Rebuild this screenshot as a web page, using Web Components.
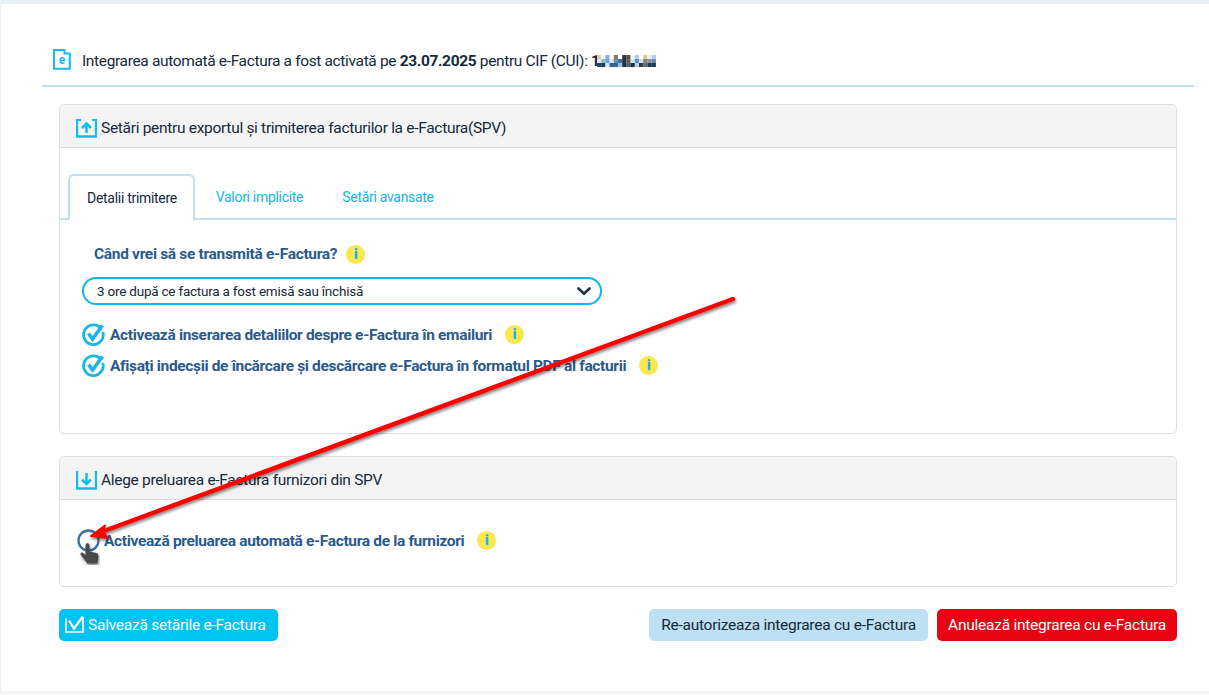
<!DOCTYPE html>
<html lang="ro">
<head>
<meta charset="utf-8">
<title>e-Factura</title>
<style>
html, body { margin: 0; height: 100%; }
body {
    background: #f5f5f5;
    font-family: Roboto, "Liberation Sans", sans-serif;
    color: #16293a;
    overflow: hidden;
}
</style>
</head>
<body>
<efactura-page></efactura-page>

<script>
const ICONS = {
    doc: `<svg width="18" height="21" viewBox="0 0 18 21" fill="none"><path d="M1 1H11.500V4.500H16.800V19.800H1Z" stroke="#12bdec" stroke-width="2"/><text x="8.800" y="15" font-family="Roboto, sans-serif" font-size="12" font-weight="700" text-anchor="middle" fill="#12bdec">e</text></svg>`,
    up: `<svg width="21" height="19" viewBox="0 0 21 19" fill="none" stroke="#12bdec"><path d="M1 0V17.500H20V0" stroke-width="2.300"/><path d="M1 1H5M16 1H20" stroke-width="2"/><path d="M10.500 14V5M6 9L10.500 4.500L15 9" stroke-width="2.500"/></svg>`,
    down: `<svg width="21" height="19" viewBox="0 0 21 19" fill="none" stroke="#12bdec"><path d="M1 0V17.500H20V0" stroke-width="2.300"/><path d="M10.500 2V12.500M6 8.500L10.500 13L15 8.500" stroke-width="2.500"/></svg>`,
    check: `<svg width="23" height="23" viewBox="0 0 23 23" fill="none" stroke="#19b5e6"><path d="M18.300 4.800A9.800 9.800 0 1 0 20.800 9" stroke-width="2.800"/><path d="M6.500 10.500L10.500 16L20.500 2.500" stroke-width="3.600"/></svg>`,
    save: `<svg width="19" height="18" viewBox="0 0 19 18" fill="none" stroke="#fff"><path d="M1 2.500V16H18V1" stroke-width="1.700"/><path d="M4 4.500L9 12.500L17.800 .5" stroke-width="2.300"/></svg>`,
    chevron: `<svg width="14" height="9" viewBox="0 0 14 9" fill="none" stroke="#1d3444" stroke-width="2.600" stroke-linecap="round" stroke-linejoin="round"><path d="M1.500 1.500L7 6.800L12.500 1.500"/></svg>`
};

class EfInfo extends HTMLElement {
    constructor() {
        super();
        this.attachShadow({mode: "open"});
        this.shadowRoot.innerHTML = `<style>
        :host {
            display: inline-flex;
            width: 19px;
            height: 19px;
            border-radius: 50%;
            background: #fde74c;
            color: #1fb4e6;
            align-items: center;
            justify-content: center;
            font-size: 15px;
            font-weight: 900;
            letter-spacing: 0;
            line-height: 1;
        }
        </style>i`;
    }
}
customElements.define("ef-info", EfInfo);

class EfCheck extends HTMLElement {
    constructor() {
        super();
        this.attachShadow({mode: "open"});
        this.shadowRoot.innerHTML = `<style>
        :host {
            display: flex;
            align-items: center;
            height: 23px;
            color: #2a5a8c;
            font-size: 15.500px;
            font-weight: 700;
            letter-spacing: -.34px;
        }
        .box { width: 23px; height: 23px; margin-right: var(--check-gap, 5px); flex: none; }
        ef-info { margin-left: 13px; }
        svg { display: block; }
        </style>
        <span class="box"><slot name="icon">${ICONS.check}</slot></span>
        <slot></slot>
        <ef-info></ef-info>`;
    }
}
customElements.define("ef-check", EfCheck);

class EfPanel extends HTMLElement {
    constructor() {
        super();
        this.attachShadow({mode: "open"});
    }
    connectedCallback() {
        this.shadowRoot.innerHTML = `<style>
        :host {
            display: block;
            border: 1px solid #dedede;
            border-radius: 5px;
            background: #fff;
        }
        header {
            height: 43px;
            box-sizing: border-box;
            display: flex;
            align-items: center;
            gap: 4px;
            padding: 4px 0 0 16px;
            background: #f4f4f4;
            border-bottom: 1px solid #dedede;
            border-radius: 5px 5px 0 0;
            font-size: 15.500px;
            letter-spacing: -.3px;
            color: #16293a;
        }
        svg { display: block; }
        </style>
        <header>${ICONS[this.getAttribute("icon")]}<span><slot name="title"></slot></span></header>
        <slot></slot>`;
    }
}
customElements.define("ef-panel", EfPanel);

class EfTabs extends HTMLElement {
    constructor() {
        super();
        this.attachShadow({mode: "open"});
        this.shadowRoot.innerHTML = `<style>
        :host {
            display: flex;
            height: 44px;
            margin-top: 26px;
            padding-left: 8px;
            border-bottom: 2px solid #bde0f3;
            font-size: 14px;
            letter-spacing: -.3px;
        }
        div {
            display: flex;
            align-items: center;
            justify-content: center;
            height: 46px;
            box-sizing: border-box;
            color: #12b5ea;
        }
        .on {
            width: 127px;
            padding-left: 1px;
            color: #16293a;
            background: #fff;
            border: 2px solid #bde0f3;
            border-bottom: 0;
            border-radius: 6px 6px 0 0;
        }
        .a { width: 129px; }
        .b { width: 128px; }
        </style>
        <div class="on">Detalii trimitere</div>
        <div class="a">Valori implicite</div>
        <div class="b">Setări avansate</div>`;
    }
}
customElements.define("ef-tabs", EfTabs);

class EfSelect extends HTMLElement {
    constructor() {
        super();
        this.attachShadow({mode: "open"});
        this.shadowRoot.innerHTML = `<style>
        :host {
            display: flex;
            align-items: center;
            justify-content: space-between;
            width: 520px;
            height: 28px;
            box-sizing: border-box;
            padding: 0 9px 0 13px;
            border: 2px solid #12b5ea;
            border-radius: 14px;
            font-size: 13.500px;
            letter-spacing: -.22px;
            color: #16293a;
        }
        svg { display: block; }
        </style>
        <slot></slot>${ICONS.chevron}`;
    }
}
customElements.define("ef-select", EfSelect);

class EfButton extends HTMLElement {
    constructor() {
        super();
        this.attachShadow({mode: "open"});
    }
    connectedCallback() {
        const kind = this.getAttribute("kind");
        this.shadowRoot.innerHTML = `<style>
        :host {
            display: inline-flex;
            align-items: center;
            justify-content: center;
            gap: 4px;
            height: 32px;
            border-radius: 5px;
            font-size: 15.500px;
            letter-spacing: -.25px;
            box-sizing: border-box;
        }
        :host([kind=save]) { background: #00c3f2; color: #fff; width: 219px; justify-content: flex-start; padding-left: 6px; }
        :host([kind=auth]) { background: #bde0f3; color: #16293a; width: 279px; }
        :host([kind=stop]) { background: #e60513; color: #fff; width: 240px; }
        svg { display: block; }
        </style>${kind === "save" ? ICONS.save : ""}<slot></slot>`;
    }
}
customElements.define("ef-button", EfButton);

class EfArrow extends HTMLElement {
    constructor() {
        super();
        this.attachShadow({mode: "open"});
        // sageata si cursorul sunt adnotari peste pagina
        this.shadowRoot.innerHTML = `<style>
        :host { position: absolute; left: 0; top: 0; pointer-events: none; }
        svg { display: block; }
        </style>
        <svg width="1209" height="695" viewBox="0 0 1209 695">
            <defs><filter id="s" x="-5%" y="-5%" width="110%" height="110%"><feDropShadow dx="1" dy="2" stdDeviation="1.600" flood-color="#000" flood-opacity=".5"/></filter></defs>
            <g filter="url(#s)">
                <path d="M733 299L104 531" stroke="#f00" stroke-width="4.500" stroke-linecap="round"/>
                <path d="M91 536L105 525.500L103 531L107.500 538Z" fill="#f00" stroke="#f00" stroke-width="2" stroke-linejoin="round"/>
            </g>
            <g filter="url(#s)">
                <path d="M85.500 545.500Q85.500 543 87.500 543Q89.500 543 89.500 545.500V551.500L96.500 553Q98.500 553.500 98.500 556L97.500 563.500H87.500L80.500 554.500Q80 552 82.500 552.500L85.500 555Z" fill="#484848"/>
            </g>
        </svg>`;
    }
}
customElements.define("ef-arrow", EfArrow);

class EfBlur extends HTMLElement {
    constructor() {
        super();
        this.attachShadow({mode: "open"});
        const rows = [
            ["#d9c9b5","#fff","#7fb0d5","#fff","#8a7a66","#fff","#2a3350","#5a5040","#fff","#a9d0ee","#fff","#d8c8a8","#f5efe0","#a9d3ee"],
            ["#dbe7ef","#8fb8d8","#6fa5cd","#dbe6ee","#5f8fb8","#3f6f98","#24324a","#6a6052","#cfe2ef","#5f94bf","#cfe0ec","#8a8474","#7f96a8","#6d8ba3"],
            ["#2c4a60","#1d3a52","#d8e3ea","#2f5f85","#36668e","#9cc0dc","#143350","#4f5f66","#153047","#b0cfe3","#2d3f50","#6d6a62","#1f3a50","#24384a"]
        ];
        const cells = rows.map((row, y) => row.map((c, x) =>
            `<rect x="${x * 4.2}" y="${y * 4}" width="4.300" height="4" fill="${c}"/>`).join("")).join("");
        this.shadowRoot.innerHTML = `<style>
        :host { display: inline-block; width: 59px; height: 12px; margin-left: -3px; vertical-align: -1px; }
        svg { display: block; }
        </style>
        <svg width="59" height="12" viewBox="0 0 59 12">${cells}</svg>`;
    }
}
customElements.define("ef-blur", EfBlur);

class EfacturaPage extends HTMLElement {
    constructor() {
        super();
        this.attachShadow({mode: "open"});
        this.shadowRoot.innerHTML = `<style>
        :host {
            display: block;
            position: relative;
            height: 695px;
            box-sizing: border-box;
            padding: 4px 0 4px 1px;
            background: #f5f5f5;
        }
        .strip { position: absolute; left: 0; top: 0; width: 100%; height: 4px; background: #e8f1f7; }
        .edge { position: absolute; left: 0; top: 0; width: 1px; height: 691px; background: #e8f1f7; }
        main {
            height: 687px;
            box-sizing: border-box;
            background: #fff;
            padding: 41px 15px 0 41px;
        }
        .status {
            display: flex;
            align-items: center;
            gap: 11px;
            height: 42px;
            padding: 0 0 8px 11px;
            box-sizing: border-box;
            border-bottom: 2px solid #bde0f3;
            font-size: 15.500px;
            letter-spacing: -.35px;
            white-space: nowrap;
        }
        .status svg { display: block; margin-top: -3px; }
        .content { padding: 0 17px; margin-top: 17px; }
        .question {
            display: flex;
            align-items: center;
            gap: 9px;
            margin: 24px 0 0 12px;
            height: 20px;
            color: #2a5a8c;
            font-size: 15.500px;
            letter-spacing: -.32px;
            font-weight: 700;
        }
        .tabpane { padding-left: 22px; }
        ef-select { margin-top: 13px; }
        .c1 { margin-top: 18px; }
        .c2 { margin-top: 8px; }
        .first { height: 330px; box-sizing: border-box; }
        .second { margin-top: 22px; height: 131px; box-sizing: border-box; }
        .pick { margin: 29px 0 0 17px; --check-gap: 4px; }
        .ring { display: block; }
        .actions { display: flex; align-items: center; margin-top: 22px; gap: 9px; }
        .actions .space { flex: 1; }
        </style>
        <div class="strip"></div>
        <div class="edge"></div>
        <main>
            <div class="status">${ICONS.doc}<span>Integrarea automată e-Factura a fost activată pe <b>23.07.2025</b> pentru CIF (CUI): <b>1</b><ef-blur></ef-blur></span></div>
            <div class="content">
                <ef-panel icon="up" class="first">
                    <span slot="title">Setări pentru exportul și trimiterea facturilor la e-Factura(SPV)</span>
                    <ef-tabs></ef-tabs>
                    <div class="tabpane">
                        <div class="question">Când vrei să se transmită e-Factura? <ef-info></ef-info></div>
                        <ef-select>3 ore după ce factura a fost emisă sau închisă</ef-select>
                        <ef-check class="c1">Activează inserarea detaliilor despre e-Factura în emailuri</ef-check>
                        <ef-check class="c2">Afișați indecșii de încărcare și descărcare e-Factura în formatul PDF al facturii</ef-check>
                    </div>
                </ef-panel>
                <ef-panel icon="down" class="second">
                    <span slot="title">Alege preluarea e-Factura furnizori din SPV</span>
                    <ef-check class="pick"><svg slot="icon" class="ring" width="23" height="23" viewBox="0 0 23 23" fill="none" stroke="#3a6f9e" stroke-width="2.300"><circle cx="11.500" cy="11.500" r="10"/></svg>Activează preluarea automată e-Factura de la furnizori</ef-check>
                </ef-panel>
                <div class="actions">
                    <ef-button kind="save">Salvează setările e-Factura</ef-button>
                    <span class="space"></span>
                    <ef-button kind="auth">Re-autorizeaza integrarea cu e-Factura</ef-button>
                    <ef-button kind="stop">Anulează integrarea cu e-Factura</ef-button>
                </div>
            </div>
        </main>
        <ef-arrow></ef-arrow>`;
    }
}
customElements.define("efactura-page", EfacturaPage);
</script>
</body>
</html>
